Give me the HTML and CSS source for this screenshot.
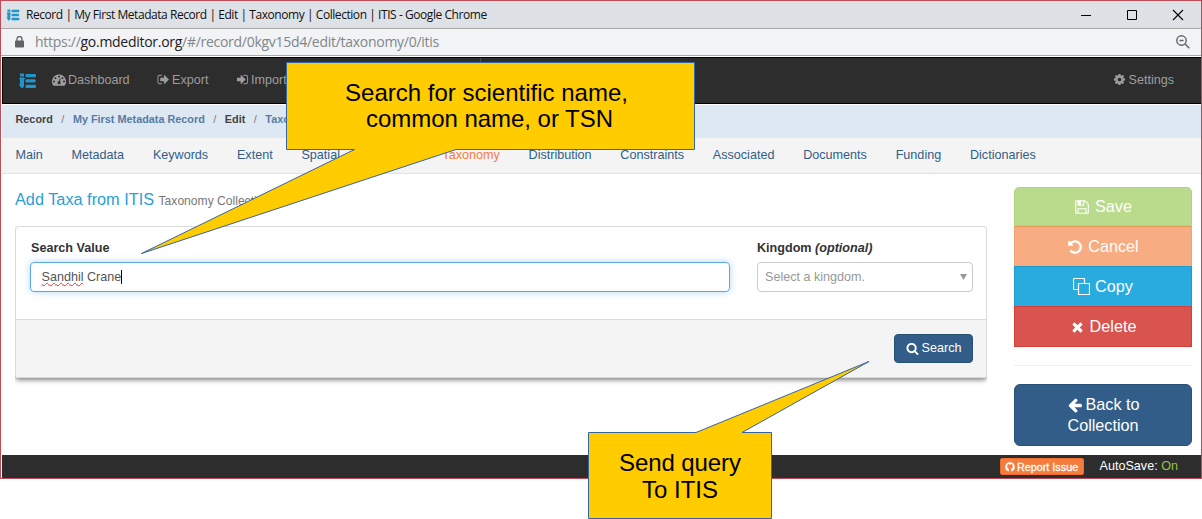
FILE: index.html
```
<!DOCTYPE html>
<html lang="en">
<head>
<meta charset="utf-8">
<title>Record | My First Metadata Record | Edit | Taxonomy | Collection | ITIS</title>
<link rel="stylesheet" href="styles.css">
</head>
<body>
<svg class="defs" width="0" height="0" aria-hidden="true">
  <symbol id="logo" viewBox="0 0 17 16"><path d="M1 .5h4v3h-4zM1 4.500h4v7h-4zM1 12h4v1.500l-2 2-2-2z"/><rect x="6.500" y="1" width="10.500" height="3.300" rx="1"/><rect x="6.500" y="6.300" width="10" height="3.300" rx="1"/><rect x="6.500" y="11.700" width="10.500" height="3.300" rx="1"/><path d="M0 5h6v1h-6zM0 11h5v1h-5z"/></symbol>
  <symbol id="search" viewBox="0 0 1792 1792"><path d="M1216 832q0-185-131.5-316.5t-316.500-131.500-316.500 131.500-131.500 316.500 131.500 316.500 316.500 131.500 316.500-131.500 131.500-316.500zm512 832q0 52-38 90t-90 38q-54 0-90-38l-343-342q-179 124-399 124-143 0-273.500-55.500t-225-150-150-225-55.500-273.500 55.500-273.500 150-225 225-150 273.500-55.500 273.500 55.500 225 150 150 225 55.500 273.500q0 220-124 399l343 343q37 37 37 90z"/></symbol>
  <symbol id="left" viewBox="0 0 1792 1792"><path d="M1664 896v128q0 53-32.500 90.500t-84.500 37.500h-704l293 294q38 36 38 90t-38 90l-75 76q-37 37-90 37-52 0-91-37l-651-652q-37-37-37-90 0-52 37-91l651-650q38-38 91-38 52 0 90 38l75 74q38 38 38 91t-38 91l-293 293h704q52 0 84.500 37.500t32.500 90.500z"/></symbol>
  <symbol id="times" viewBox="0 0 1792 1792"><path d="M1490 1322q0 40-28 68l-136 136q-28 28-68 28t-68-28l-294-294-294 294q-28 28-68 28t-68-28l-136-136q-28-28-28-68t28-68l294-294-294-294q-28-28-28-68t28-68l136-136q28-28 68-28t68 28l294 294 294-294q28-28 68-28t68 28l136 136q28 28 28 68t-28 68l-294 294 294 294q28 28 28 68z"/></symbol>
  <symbol id="undo" viewBox="0 0 1792 1792"><path d="M1664 896q0 156-61 298t-164 245-245 164-298 61q-172 0-327-72.500t-264-204.500q-7-10-6.500-22.500t8.500-20.500l137-138q10-9 25-9 16 2 23 12 73 95 179 147t225 52q104 0 198.500-40.500t163.500-109.500 109.500-163.500 40.500-198.500-40.500-198.500-109.500-163.500-163.500-109.500-198.500-40.500q-98 0-188 35.500t-160 101.500l137 138q31 30 14 69-17 40-59 40h-448q-26 0-45-19t-19-45v-448q0-42 40-59 39-17 69 14l130 129q107-101 244.500-156.500t284.500-55.500q156 0 298 61t245 164 164 245 61 298z"/></symbol>
  <symbol id="cog" viewBox="0 0 1792 1792"><path d="M1152 896q0-106-75-181t-181-75-181 75-75 181 75 181 181 75 181-75 75-181zm512-109v222q0 12-8 23t-20 13l-185 28q-19 54-39 91 35 50 107 138 10 12 10 25t-9 23q-27 37-99 108t-94 71q-12 0-26-9l-138-108q-44 23-91 38-16 136-29 186-7 28-36 28h-222q-14 0-24.500-8.500t-11.500-21.500l-28-184q-49-16-90-37l-141 107q-10 9-25 9-14 0-25-11-126-114-165-168-7-10-7-23 0-12 8-23 15-21 51-66.500t54-70.500q-27-50-41-99l-183-27q-13-2-21-12.500t-8-23.500v-222q0-12 8-23t19-13l186-28q14-46 39-92-40-57-107-138-10-12-10-24 0-10 9-23 26-36 98.500-107.500t94.500-71.500q13 0 26 10l138 107q44-23 91-38 16-136 29-186 7-28 36-28h222q14 0 24.500 8.500t11.500 21.500l28 184q49 16 90 37l142-107q9-9 24-9 13 0 25 10 129 119 165 170 7 8 7 22 0 12-8 23-15 21-51 66.500t-54 70.500q26 50 41 98l183 28q13 2 21 12.500t8 23.500z"/></symbol>
  <symbol id="out" viewBox="0 0 1792 1792"><path d="M704 1440q0 4 1 20t.5 26.500-3 23.500-10 19.500-20.500 6.500h-320q-119 0-203.500-84.500t-84.500-203.500v-704q0-119 84.500-203.500t203.500-84.500h320q13 0 22.500 9.500t9.500 22.500q0 4 1 20t.5 26.500-3 23.500-10 19.500-20.500 6.500h-320q-66 0-113 47t-47 113v704q0 66 47 113t113 47h312l11.500 1 11.500 3 8 5.500 7 9 2 13.500zm928-544q0 26-19 45l-544 544q-19 19-45 19t-45-19-19-45v-288h-448q-26 0-45-19t-19-45v-384q0-26 19-45t45-19h448v-288q0-26 19-45t45-19 45 19l544 544q19 19 19 45z"/></symbol>
  <symbol id="in" viewBox="0 0 1792 1792"><path d="M1312 896q0 26-19 45l-544 544q-19 19-45 19t-45-19-19-45v-288h-448q-26 0-45-19t-19-45v-384q0-26 19-45t45-19h448v-288q0-26 19-45t45-19 45 19l544 544q19 19 19 45zm352-352v704q0 119-84.500 203.500t-203.500 84.500h-320q-13 0-22.500-9.500t-9.500-22.500q0-4-1-20t-.5-26.500 3-23.500 10-19.500 20.500-6.500h320q66 0 113-47t47-113v-704q0-66-47-113t-113-47h-312l-11.500-1-11.500-3-8-5.500-7-9-2-13.500q0-4-1-20t-.5-26.500 3-23.500 10-19.500 20.500-6.500h320q119 0 203.500 84.500t84.500 203.500z"/></symbol>
  <symbol id="save" viewBox="0 0 1792 1792"><path d="M512 1536h768v-384h-768v384zm896 0h128v-896q0-14-10-38.500t-20-34.500l-281-281q-10-10-34-20t-39-10v416q0 40-28 68t-68 28h-576q-40 0-68-28t-28-68v-416h-128v1280h128v-416q0-40 28-68t68-28h832q40 0 68 28t28 68v416zm-384-928v-320q0-13-9.500-22.500t-22.500-9.500h-192q-13 0-22.500 9.500t-9.500 22.500v320q0 13 9.500 22.500t22.500 9.500h192q13 0 22.500-9.500t9.500-22.500zm640 32v928q0 40-28 68t-68 28h-1344q-40 0-68-28t-28-68v-1344q0-40 28-68t68-28h928q40 0 88 20t76 48l280 280q28 28 48 76t20 88z"/></symbol>
  <symbol id="clone" viewBox="0 0 17 17"><path d="M5.500 5.500h11v11h-11zM5.500 11.500h-4q-1 0-1-1v-9q0-1 1-1h9q1 0 1 1v4" fill="none" stroke="currentColor" stroke-width="1.200"/></symbol>
  <symbol id="dash" viewBox="0 0 14 12"><path fill-rule="evenodd" d="M7 .500a7 7 0 0 1 5.900 10.800q-.2.400-.7.400H1.800q-.5 0-.7-.4A7 7 0 0 1 7 .500zM7 1.700a.9.900 0 1 0 .01 0zM3.500 3.200a.9.900 0 1 0 .01 0zM10.500 3.200a.9.900 0 1 0 .01 0zM2 6.600a.9.900 0 1 0 .01 0zM12 6.600a.9.900 0 1 0 .01 0zM7.700 4.300l-.7 3a1.500 1.500 0 1 0 1 .3l.6-3z"/></symbol>
  <symbol id="github" viewBox="0 0 16 16"><path d="M8 .500a7.500 7.500 0 0 0-2.500 14.600c.4.100.5-.2.500-.4v-2.400c-.2-.9.100-1.200.4-1.500C4.700 10.600 3.500 9.900 3.500 7.300c0-.8.300-1.500.8-2-.1-.2-.3-1 .1-2 0 0 .7-.2 2.100.8a7 7 0 0 1 3 0c1.400-1 2.100-.8 2.100-.8.400 1 .2 1.800.1 2 .5.500.8 1.200.8 2 0 2.600-1.200 3.300-2.900 3.500.3.300.4.700.4 1.500v2.400c0 .2.100.5.500.4A7.500 7.500 0 0 0 8 .500z"/></symbol>
</svg>

<div class="window">
  <div class="titlebar">
    <svg class="logo favicon"><use href="#logo"/></svg>
    <span class="title">Record | My First Metadata Record | Edit | Taxonomy | Collection | ITIS - Google Chrome</span>
    <svg class="controls" width="104" height="12" viewBox="0 0 104 12" fill="none" stroke="#000"><path d="M1 6.500h10M47.500 1.500h9v9h-9z"/><path d="M93 1l10 10M103 1l-10 10" stroke-width="1.100"/></svg>
  </div>
  <div class="addressbar">
    <svg class="lock" width="9" height="12" viewBox="0 0 9 12"><rect x="0" y="4.500" width="9" height="7" rx="1" fill="#5f6368"/><path d="M2 5V3a2.500 2.500 0 0 1 5 0v2" fill="none" stroke="#5f6368" stroke-width="1.300"/></svg>
    <span class="url">https://<b>go.mdeditor.org</b>/#/record/0kgv15d4/edit/taxonomy/0/itis</span>
    <svg class="zoom" width="14" height="14" viewBox="0 0 14 14" fill="none" stroke="#5f6368" stroke-width="1.400"><circle cx="5.500" cy="5.500" r="4.700"/><path d="M9 9l4.300 4.300M3.500 5.500h4"/></svg>
  </div>
  <nav class="navbar">
    <svg class="logo brand"><use href="#logo"/></svg>
    <a class="nav-dash"><svg class="dash"><use href="#dash"/></svg>Dashboard</a>
    <a class="nav-export"><svg class="fa"><use href="#out"/></svg>Export</a>
    <a class="nav-import"><svg class="fa"><use href="#in"/></svg>Import</a>
    <span class="divider"></span>
    <a class="settings"><svg class="fa"><use href="#cog"/></svg>Settings</a>
  </nav>
  <div class="breadcrumb"><span>Record</span><i>/</i><a>My First Metadata Record</a><i>/</i><span>Edit</span><i>/</i><a>Taxonomy</a></div>
  <div class="tabs"><a>Main</a><a>Metadata</a><a>Keywords</a><a>Extent</a><a>Spatial</a><a>Lineage</a><a class="active">Taxonomy</a><a>Distribution</a><a>Constraints</a><a>Associated</a><a>Documents</a><a>Funding</a><a>Dictionaries</a></div>
  <div class="content">
    <main class="main">
      <h4>Add Taxa from ITIS <small>Taxonomy Collection</small></h4>
      <div class="clip"><section class="card">
        <div class="fields">
          <div class="field value"><label>Search Value</label><div class="input focused"><span class="misspelt">Sandhil</span>&nbsp;Crane<span class="caret"></span></div></div>
          <div class="field kingdom"><label>Kingdom <em>(optional)</em></label><div class="input select"><span>Select a kingdom.</span><span class="arrow"></span></div></div>
        </div>
        <div class="card-footer"><button class="btn-search"><svg class="fa"><use href="#search"/></svg>Search</button></div>
      </section></div>
    </main>
    <aside class="side">
      <div class="stack">
        <button class="save"><svg class="fa"><use href="#save"/></svg>Save</button>
        <button class="cancel"><svg class="fa"><use href="#undo"/></svg>Cancel</button>
        <button class="copy"><svg class="fa wide"><use href="#clone"/></svg>Copy</button>
        <button class="delete"><svg class="fa narrow"><use href="#times"/></svg>Delete</button>
      </div>
      <hr>
      <button class="back"><span><svg class="fa"><use href="#left"/></svg>Back to</span><span>Collection</span></button>
    </aside>
  </div>
  <footer class="footer"><button class="report"><svg class="gh"><use href="#github"/></svg>Report Issue</button><span class="autosave">AutoSave: <b>On</b></span></footer>
</div>

<svg class="callouts" width="1202" height="519" viewBox="0 0 1202 519">
  <path d="M286.500 62.500H694.500V149.500H456L141.500 253.500L354.500 149.500H286.500z"/>
  <text x="345" y="101" textLength="283">Search for scientific name,</text>
  <text x="366" y="127" textLength="247">common name, or TSN</text>
  <path d="M588.500 432.500H696L869 361.500L742 432.500H771.500V518.500H588.500z"/>
  <text x="619" y="471" textLength="122">Send query</text>
  <text x="642" y="498" textLength="76">To ITIS</text>
</svg>
</body>
</html>
```
FILE: styles.css
```
* { box-sizing: border-box; }
body { margin: 0; height: 519px; overflow: hidden; background: #fff; color: #333; font: 12.6px/18px "Liberation Sans", Arial, sans-serif; }
svg { display: block; flex: none; fill: currentColor; }
.defs { position: absolute; }
button { display: flex; align-items: center; justify-content: center; margin: 0; padding: 0; font: inherit; color: #fff; border: 1px solid; }
.fa { width: 13px; height: 13px; }
.logo { color: #1f95c9; }

.window { display: flex; flex-direction: column; height: 479px; border: 1px solid #be4b55; }
.titlebar { display: flex; align-items: center; height: 28px; padding: 0 17px 0 5px; background: #dee1e6; border-bottom: 1px solid #aaa; color: #111; font: 12px/16px "Open Sans", "Noto Sans", sans-serif; }
.favicon { width: 14px; height: 12px; margin-right: 6px; }
.title { white-space: nowrap; letter-spacing: -.44px; }
.controls { margin-left: auto; fill: none; }
.addressbar { display: flex; align-items: center; height: 27px; padding: 0 11px 0 14px; background: #f1f3f4; border-bottom: 1px solid #aaa; color: #80868b; font: 14px/18px "Open Sans", "Noto Sans", sans-serif; }
.lock { margin-right: 11px; }
.url { white-space: nowrap; letter-spacing: -.28px; }
.url b { font-weight: 400; color: #202124; }
.zoom { margin-left: auto; fill: none; }

.navbar { display: flex; align-items: center; height: 47px; margin: 1px 0 1px 1px; padding: 0 27px 0 16px; background: #2d2d2d; border: 1px solid #000; border-right: 0; color: #9d9d9d; }
.navbar a { display: flex; align-items: center; gap: 3px; padding-bottom: 2px; }
.brand { width: 17px; height: 16px; margin: 0 16px 0 0; }
.dash { width: 14px; height: 12px; }
.navbar .nav-dash { width: 105px; gap: 2px; }
.nav-export { width: 79px; }
.navbar .nav-export, .navbar .nav-import { gap: 2px; }
.divider { align-self: stretch; width: 1px; margin-left: 193px; background: #4a4a4a; }
.navbar .settings { margin-left: auto; gap: 2px; }

.breadcrumb { display: flex; align-items: center; height: 33px; margin-left: 1px; padding: 0 0 6px 13.500px; background: #dee8f2; font-size: 10.850px; font-weight: 700; color: #444; }
.breadcrumb a { color: #567ba5; }
.breadcrumb i { width: 20px; text-align: center; font-style: normal; font-weight: 400; color: #777; }
.tabs { display: flex; height: 36px; margin-left: 1px; padding-top: 8px; background: #f4f4f4; border-bottom: 1px solid #e2e2e2; color: #325d88; }
.tabs a { padding: 0 14.400px; white-space: nowrap; }
.tabs a:first-child { padding-left: 13.500px; }
.tabs .active { color: #f47c3c; }

.content { display: flex; flex: 1; min-height: 0; padding: 13px 9px 0 14px; }
.main { width: 972px; }
h4 { margin: 0 0 14px; height: 25px; font-size: 16.300px; line-height: 25px; font-weight: 400; color: #29a0d6; white-space: nowrap; }
h4 small { font-size: 12.100px; color: #777; }
.clip { padding-bottom: 12px; overflow: hidden; }
.card { height: 152px; border: 1px solid #dadada; border-radius: 4px; box-shadow: 0 2px 5px rgba(0,0,0,.5); }
.fields { display: flex; justify-content: space-between; height: 92px; padding: 12px 13px 0 14px; }
.value { width: 700px; }
.value label { padding-left: 1px; }
.kingdom { width: 216px; }
label { display: block; height: 23px; line-height: 18px; font-weight: 700; }
.input { display: flex; align-items: center; height: 30px; padding: 0 7px 0 10.500px; border: 1px solid #ccc; border-radius: 4px; color: #555; }
.focused { border-color: #5ca8e5; box-shadow: 0 0 7px rgba(102,175,233,.5); }
.misspelt { line-height: 14px; text-decoration: underline wavy #e33 1px; text-underline-offset: 1px; text-decoration-skip-ink: none; }
.caret { width: 1px; height: 14px; background: #000; }
.select { justify-content: space-between; padding: 0 5px 0 7px; color: #999; }
.arrow { width: 7px; height: 6px; background: #999; clip-path: polygon(0 0, 100% 0, 50% 100%); }
.card-footer { display: flex; justify-content: flex-end; height: 58px; padding: 14px 13px 0; background: #f4f4f4; border-top: 1px solid #dadada; }
.btn-search { width: 79px; height: 29px; padding-bottom: 1px; gap: 3px; background: #325d88; border-color: #28506f; border-radius: 4px; }

.side { width: 178px; margin-left: 27px; font-size: 16.200px; line-height: 21px; }
.stack { display: flex; flex-direction: column; }
.stack button { height: 40px; gap: 5px; }
.side .fa { width: 16px; height: 16px; }
.side .wide { width: 17px; height: 17px; }
.side .narrow { width: 15px; }
.stack .save { height: 39px; background: #badb8b; border-color: #b0d37c; border-radius: 5px 5px 0 0; }
.cancel { background: #f8ac82; border-color: #e49a5a #f4a274 #f4a274; }
.copy { background: #29abe0; border-color: #209bce; }
.stack .cancel, .stack .copy { border-bottom: 0; }
.stack .delete { height: 41px; background: #d9534f; border-color: #d43f3a; }
hr { margin: 18px 0; border: 0; border-top: 1px solid #eee; }
.back { flex-direction: column; width: 178px; height: 62px; background: #325d88; border-color: #285078; border-radius: 6px; }
.back span { display: flex; align-items: center; gap: 3px; }

.footer { display: flex; align-items: center; justify-content: flex-end; height: 23px; margin-left: 1px; padding-right: 23px; background: #2d2d2d; color: #fff; }
.report { width: 84px; height: 17px; gap: 2px; background: #f47c3c; border-color: #ef6c2c; border-radius: 2px; font-size: 10.800px; white-space: nowrap; -webkit-text-stroke: .3px #fff; }
.gh { width: 10px; height: 10px; }
.autosave { margin: -2px 0 0 16px; }
.autosave b { font-weight: 400; color: #93c54b; }

.callouts { position: absolute; top: 0; left: 0; }
.callouts path { fill: #fc0; stroke: #3465a4; }
.callouts text { fill: #000; font-size: 24px; }
```
